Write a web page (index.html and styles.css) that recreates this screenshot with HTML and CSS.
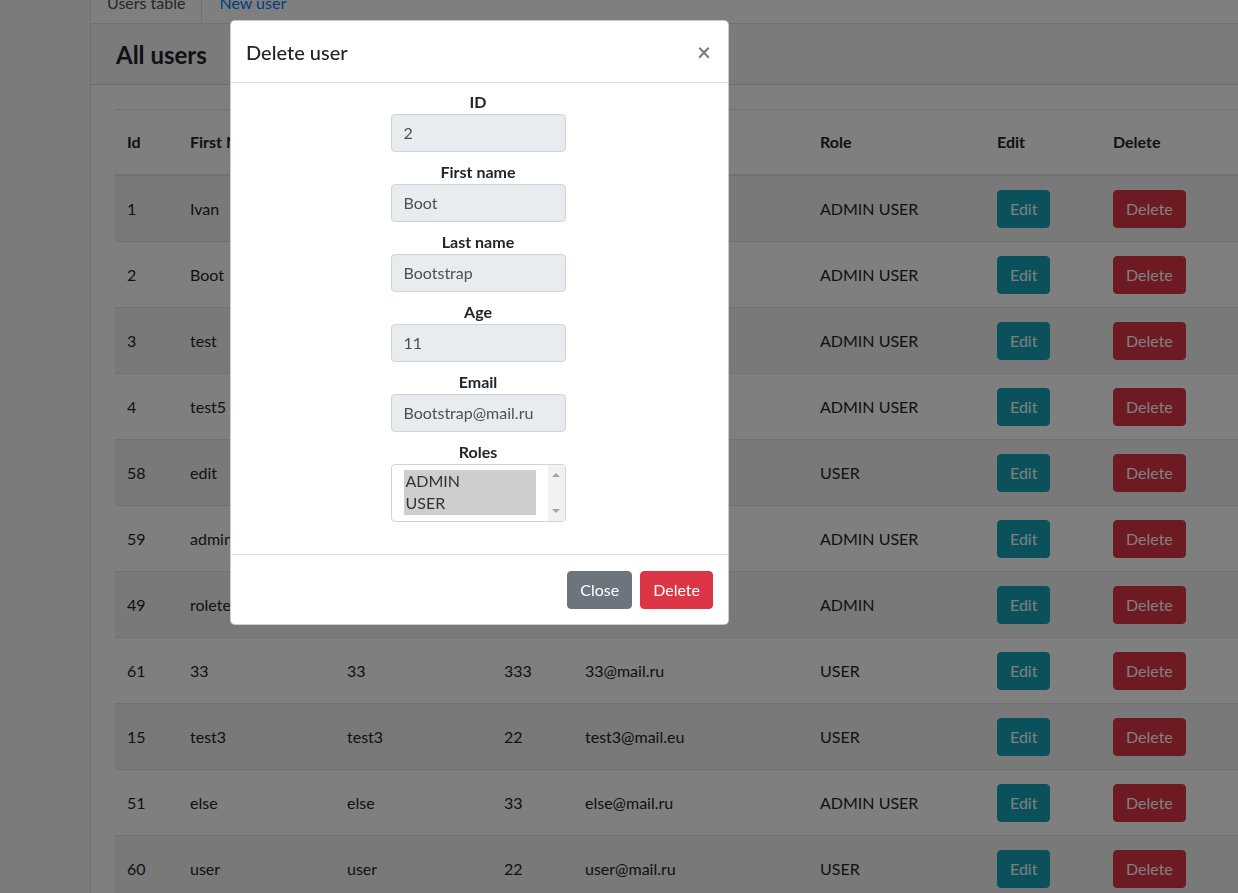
FILE: index.html
```html
<!DOCTYPE html>
<html lang="en">
<head>
<meta charset="utf-8">
<title>Admin panel</title>
<link rel="stylesheet" href="styles.css">
</head>
<body>
<div class="layout">
  <aside class="sidebar"></aside>
  <main class="main">
    <ul class="tabs">
      <li class="tab active">Users table</li>
      <li class="tab link">New user</li>
    </ul>
    <section class="card">
      <header class="card-header"><h3>All users</h3></header>
      <div class="card-body">
        <table class="users">
          <colgroup>
            <col class="c-id"><col class="c-fn"><col class="c-ln"><col class="c-age"><col class="c-email"><col class="c-role"><col class="c-edit"><col class="c-del">
          </colgroup>
          <thead>
            <tr><th>Id</th><th>First Name</th><th>Last Name</th><th>Age</th><th>Email</th><th>Role</th><th>Edit</th><th>Delete</th></tr>
          </thead>
          <tbody>
            <tr><td>1</td><td>Ivan</td><td>Ivanov</td><td>30</td><td>ivan@mail.ru</td><td>ADMIN USER</td><td><span class="btn btn-info">Edit</span></td><td><span class="btn btn-danger">Delete</span></td></tr>
            <tr><td>2</td><td>Boot</td><td>Bootstrap</td><td>11</td><td>Bootstrap@mail.ru</td><td>ADMIN USER</td><td><span class="btn btn-info">Edit</span></td><td><span class="btn btn-danger">Delete</span></td></tr>
            <tr><td>3</td><td>test</td><td>test</td><td>12</td><td>test@mail.ru</td><td>ADMIN USER</td><td><span class="btn btn-info">Edit</span></td><td><span class="btn btn-danger">Delete</span></td></tr>
            <tr><td>4</td><td>test5</td><td>test5</td><td>15</td><td>test5@mail.ru</td><td>ADMIN USER</td><td><span class="btn btn-info">Edit</span></td><td><span class="btn btn-danger">Delete</span></td></tr>
            <tr><td>58</td><td>edit</td><td>edit</td><td>20</td><td>edit@mail.ru</td><td>USER</td><td><span class="btn btn-info">Edit</span></td><td><span class="btn btn-danger">Delete</span></td></tr>
            <tr><td>59</td><td>admin</td><td>admin</td><td>25</td><td>admin@mail.ru</td><td>ADMIN USER</td><td><span class="btn btn-info">Edit</span></td><td><span class="btn btn-danger">Delete</span></td></tr>
            <tr><td>49</td><td>roletest</td><td>roletest</td><td>44</td><td>role@mail.ru</td><td>ADMIN</td><td><span class="btn btn-info">Edit</span></td><td><span class="btn btn-danger">Delete</span></td></tr>
            <tr><td>61</td><td>33</td><td>33</td><td>333</td><td>33@mail.ru</td><td>USER</td><td><span class="btn btn-info">Edit</span></td><td><span class="btn btn-danger">Delete</span></td></tr>
            <tr><td>15</td><td>test3</td><td>test3</td><td>22</td><td>test3@mail.eu</td><td>USER</td><td><span class="btn btn-info">Edit</span></td><td><span class="btn btn-danger">Delete</span></td></tr>
            <tr><td>51</td><td>else</td><td>else</td><td>33</td><td>else@mail.ru</td><td>ADMIN USER</td><td><span class="btn btn-info">Edit</span></td><td><span class="btn btn-danger">Delete</span></td></tr>
            <tr><td>60</td><td>user</td><td>user</td><td>22</td><td>user@mail.ru</td><td>USER</td><td><span class="btn btn-info">Edit</span></td><td><span class="btn btn-danger">Delete</span></td></tr>
          </tbody>
        </table>
      </div>
    </section>
  </main>
</div>

<div class="backdrop"></div>

<div class="modal">
  <div class="modal-header">
    <h5 class="modal-title">Delete user</h5>
    <span class="close">×</span>
  </div>
  <div class="modal-body">
    <div class="group"><label>ID</label><div class="field">2</div></div>
    <div class="group"><label>First name</label><div class="field">Boot</div></div>
    <div class="group"><label>Last name</label><div class="field">Bootstrap</div></div>
    <div class="group"><label>Age</label><div class="field">11</div></div>
    <div class="group"><label>Email</label><div class="field">Bootstrap@mail.ru</div></div>
    <div class="group"><label>Roles</label>
      <div class="roles">
        <div class="options">
          <div class="opt">ADMIN</div>
          <div class="opt">USER</div>
        </div>
        <div class="scroll"><span class="up"></span><span class="down"></span></div>
      </div>
    </div>
  </div>
  <div class="modal-footer">
    <span class="btn btn-secondary">Close</span>
    <span class="btn btn-danger">Delete</span>
  </div>
</div>
</body>
</html>
```

FILE: styles.css
```css
* { box-sizing: border-box; }
html, body { margin: 0; height: 100%; overflow: hidden; }
body {
  font-family: "Lato", "Noto Sans", sans-serif;
  font-size: 16px;
  line-height: 24px;
  color: #212529;
  background: #fff;
}
.layout { display: flex; min-height: 100%; width: 1400px; }
.sidebar { width: 90px; flex: none; background: #f6f7f8; }
.main { flex: 1; margin-top: -18px; background: #fff; }

.tabs {
  list-style: none; margin: 0; padding: 0;
  display: flex;
  border-bottom: 1px solid #dee2e6;
}
.tab { padding: 8px 16px; border: 1px solid transparent; border-bottom: 0; }
.tab.active { border-color: #dee2e6; background: #fff; color: #495057; border-radius: 4px 4px 0 0; }
.tab.link { color: #007bff; }

.card { border: 1px solid rgba(0,0,0,.125); border-top: 0; }
.card-header {
  background: rgba(0,0,0,.03);
  border-bottom: 1px solid rgba(0,0,0,.125);
  padding: 16px 25px 14px;
}
.card-header h3 { margin: 0; font-size: 24px; font-weight: 700; line-height: 30px; }
.card-body { padding: 24px; }

.users { border-collapse: collapse; table-layout: fixed; width: 1136px; }
.c-id { width: 63px; } .c-fn { width: 157px; } .c-ln { width: 157px; } .c-age { width: 81px; }
.c-email { width: 235px; } .c-role { width: 177px; } .c-edit { width: 116px; } .c-del { width: 150px; }
.users th {
  text-align: left; font-weight: 700;
  padding: 20px 12px;
  border-top: 1px solid #dee2e6;
  border-bottom: 2px solid #dee2e6;
}
.users td { padding: 14px 12px 13px; border-top: 1px solid #dee2e6; vertical-align: middle; }
.users tbody tr:nth-child(odd) { background: rgba(0,0,0,.05); }

.btn {
  display: inline-block; padding: 6px 12px; line-height: 24px;
  border: 1px solid transparent; border-radius: 4px; color: #fff;
}
.btn-info { background: #17a2b8; border-color: #17a2b8; }
.btn-danger { background: #dc3545; border-color: #dc3545; }
.btn-secondary { background: #6c757d; border-color: #6c757d; }

.backdrop { position: fixed; inset: 0; background: rgba(0,0,0,.5); }

.modal {
  position: fixed; left: 230px; top: 20px; width: 499px;
  background: #fff; border: 1px solid rgba(0,0,0,.2); border-radius: 5px;
}
.modal-header {
  display: flex; align-items: center; justify-content: space-between;
  padding: 16px 17px 15px 15px;
  border-bottom: 1px solid #dee2e6;
}
.modal-title { margin: 0; font-size: 20px; font-weight: 500; line-height: 30px; }
.close { font-size: 24px; font-weight: 700; color: #000; opacity: .5; line-height: 24px; }

.modal-body { padding: 7px 18px 24px 15px; display: flex; flex-direction: column; align-items: center; }
.group { display: flex; flex-direction: column; align-items: center; margin-bottom: 8px; }
.group label { font-weight: 700; line-height: 24px; }
.field {
  width: 175px; height: 38px; padding: 6px 12px;
  background: #e9ecef; border: 1px solid #ced4da; border-radius: 4px;
  color: #495057;
}
.roles {
  width: 175px; height: 58px; display: flex;
  border: 1px solid #ced4da; border-radius: 4px; background: #fff;
  padding: 5px 0 5px 12px; color: #495057;
}
.options { width: 132px; background: #cecece; height: 45px; }
.opt { line-height: 22px; padding-left: 2px; color: #333; }
.scroll {
  margin-left: auto; width: 17px; margin-top: -5px; margin-bottom: -5px;
  background: #f1f1f1; border-radius: 0 3px 3px 0;
  display: flex; flex-direction: column; justify-content: space-between; align-items: center;
  padding: 8px 0;
}
.up, .down { width: 0; height: 0; border-left: 4px solid transparent; border-right: 4px solid transparent; }
.up { border-bottom: 4px solid #a3a3a3; }
.down { border-top: 4px solid #a3a3a3; }

.modal-footer {
  display: flex; justify-content: flex-end; gap: 8px;
  padding: 16px 15px 15px;
  border-top: 1px solid #dee2e6;
}
```
